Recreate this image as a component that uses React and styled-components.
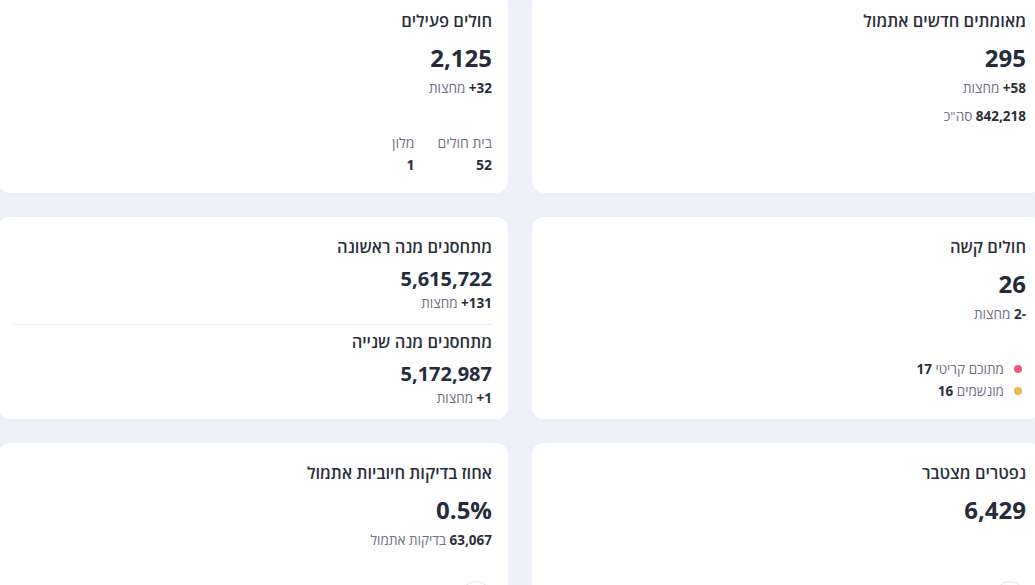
import React from "react";
import styled, { createGlobalStyle } from "styled-components";

const GlobalStyle = createGlobalStyle`
    html, body {
        margin: 0;
        padding: 0;
        background: #edf0f7;
        overflow: hidden;
    }
    body {
        font-family: "Open Sans", "Noto Sans", "DejaVu Sans", sans-serif;
        color: #2b2f3b;
    }
`;

const Board = styled.main`
    direction: rtl;
    display: grid;
    grid-template-columns: repeat(2, 510px);
    grid-auto-rows: 202px;
    gap: 24px;
    width: 1044px;
    margin: -9px 0 0 -2px;
`;

const Card = styled.section`
    display: flex;
    flex-direction: column;
    background: #ffffff;
    border-radius: 12px;
    padding: 19px 16px;
    box-sizing: border-box;
    text-align: right;
`;

const Title = styled.h3`
    margin: ${({ $top }) => $top || 0}px 0 0;
    font-size: 16.5px;
    line-height: 22px;
    font-weight: 600;
    color: #2b2f3b;
`;

const Value = styled.div`
    margin-top: ${({ $compact }) => ($compact ? 5 : 10)}px;
    font-size: ${({ $compact }) => ($compact ? 20 : 24)}px;
    line-height: 32px;
    font-weight: 700;
    color: #262b3b;
`;

const Sub = styled.div`
    font-size: 13.5px;
    line-height: ${({ $compact }) => ($compact ? 16 : 28)}px;
    color: #6d7181;

    b {
        font-weight: 700;
        color: #2b2f3b;
    }
`;

const Divider = styled.hr`
    margin: 13px 0 0;
    border: none;
    border-top: 1px solid #e9ebf1;
    height: 0;
`;

const Breakdown = styled.div`
    display: grid;
    grid-template-columns: auto auto;
    justify-content: start;
    column-gap: 23px;
    margin-top: 30px;
    font-size: 14px;
    line-height: 22px;
`;

const BreakLabel = styled.span`
    color: #6d7181;
`;

const BreakValue = styled.span`
    font-weight: 700;
    color: #2b2f3b;
`;

const Legend = styled.ul`
    list-style: none;
    margin: 30px 4px 0 0;
    padding: 0;
    font-size: 13.5px;
    line-height: 22px;
`;

const LegendItem = styled.li`
    display: flex;
    align-items: center;
    gap: 10px;
    color: #6d7181;

    b {
        font-weight: 700;
        color: #2b2f3b;
    }
`;

const Dot = styled.span`
    width: 8px;
    height: 8px;
    border-radius: 50%;
    background: ${({ $color }) => $color};
`;

const InfoButton = styled.button`
    margin-top: auto;
    margin-bottom: 13px;
    align-self: flex-start;
    width: 32px;
    height: 32px;
    border-radius: 50%;
    border: 1px solid #e6e8ee;
    background: #ffffff;
    padding: 0;
`;

// positive deltas are written number-first so the plus lands on the left in rtl
const Delta = ({ value }) => (
    <Sub>
        <b>{value}</b> מחצות
    </Sub>
);

const App = () => {
    return (
        <>
            <GlobalStyle />
            <Board>
                <Card>
                    <Title>מאומתים חדשים אתמול</Title>
                    <Value>295</Value>
                    <Delta value="58+" />
                    <Sub>
                        <b>842,218</b> סה"כ
                    </Sub>
                </Card>

                <Card>
                    <Title>חולים פעילים</Title>
                    <Value>2,125</Value>
                    <Delta value="32+" />
                    <Breakdown>
                        <BreakLabel>בית חולים</BreakLabel>
                        <BreakLabel>מלון</BreakLabel>
                        <BreakValue>52</BreakValue>
                        <BreakValue>1</BreakValue>
                    </Breakdown>
                </Card>

                <Card>
                    <Title>חולים קשה</Title>
                    <Value>26</Value>
                    <Delta value="-2" />
                    <Legend>
                        <LegendItem>
                            <Dot $color="#ee5b78" />
                            <span>
                                מתוכם קריטי <b>17</b>
                            </span>
                        </LegendItem>
                        <LegendItem>
                            <Dot $color="#e8b94c" />
                            <span>
                                מונשמים <b>16</b>
                            </span>
                        </LegendItem>
                    </Legend>
                </Card>

                <Card>
                    <Title>מתחסנים מנה ראשונה</Title>
                    <Value $compact>5,615,722</Value>
                    <Sub $compact>
                        <b>131+</b> מחצות
                    </Sub>
                    <Divider />
                    <Title $top={6}>מתחסנים מנה שנייה</Title>
                    <Value $compact>5,172,987</Value>
                    <Sub $compact>
                        <b>1+</b> מחצות
                    </Sub>
                </Card>

                <Card>
                    <Title>נפטרים מצטבר</Title>
                    <Value>6,429</Value>
                    <InfoButton aria-label="מידע" />
                </Card>

                <Card>
                    <Title>אחוז בדיקות חיוביות אתמול</Title>
                    <Value>0.5%</Value>
                    <Sub>
                        <b>63,067</b> בדיקות אתמול
                    </Sub>
                    <InfoButton aria-label="מידע" />
                </Card>
            </Board>
        </>
    );
};

export default App;
